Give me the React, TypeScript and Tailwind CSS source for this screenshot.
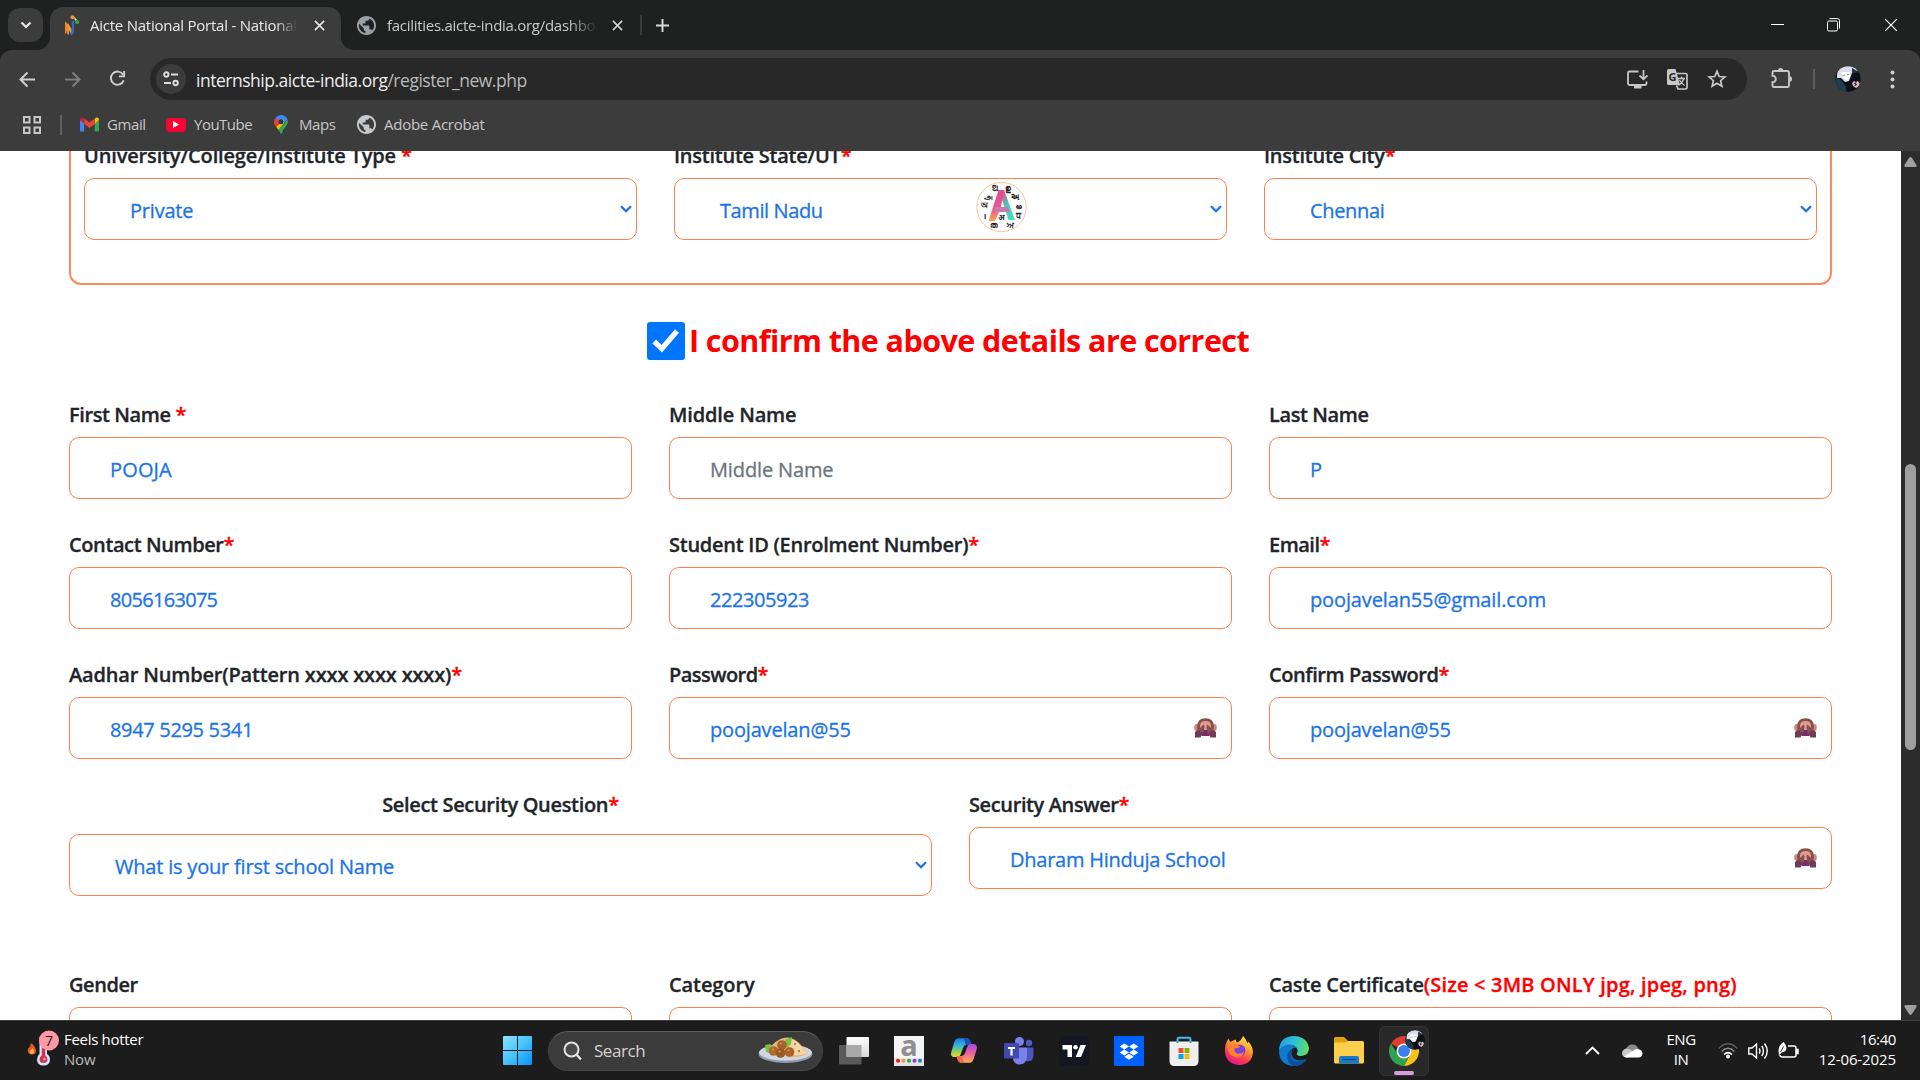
import type { ReactNode } from 'react';
import clsx from 'clsx';

/* ---------- Browser chrome ---------- */

function Globe({ fill }: { fill: string }) {
  return (
    <svg width="19" height="19" viewBox="2 2 20 20" className="shrink-0">
      <path
        d="M12 2C6.480 2 2 6.480 2 12s4.480 10 10 10 10-4.480 10-10S17.520 2 12 2zm-1 17.930c-3.950-.490-7-3.850-7-7.930 0-.620.080-1.210.210-1.790L9 15v1c0 1.100.9 2 2 2v1.930zm6.900-2.540c-.260-.810-1-1.390-1.900-1.390h-1v-3c0-.550-.450-1-1-1H8v-2h2c.550 0 1-.450 1-1V7h2c1.100 0 2-.9 2-2v-.410c2.930 1.190 5 4.060 5 7.410 0 2.080-.8 3.970-2.100 5.390z"
        fill={fill}
      />
    </svg>
  );
}

function CloseX({ size, color, width = 1.8 }: { size: number; color: string; width?: number }) {
  return (
    <svg width={size} height={size} viewBox="0 0 12 12" className="shrink-0" fill="none" stroke={color} strokeWidth={width}>
      <path d="M1 1 11 11M11 1 1 11" />
    </svg>
  );
}

function TabStrip() {
  return (
    <div className="flex h-[50px] items-start bg-[#1f2120]">
      <div className="ml-2 mt-2 flex h-[34px] w-[35px] items-center justify-center rounded-[12px] bg-[#3c3c3c]">
        <svg width="12" height="8" viewBox="0 0 12 8" fill="none" stroke="#e6e6e6" strokeWidth="2.2">
          <path d="M1.500 1.500 6 6 10.500 1.500" />
        </svg>
      </div>
      <div className="relative ml-[7px] mt-[7px] flex h-[43px] w-[291px] items-center rounded-t-[13px] bg-[#3c3c3c] pb-[7px]">
        <svg className="absolute -left-[13px] bottom-0" width="13" height="13" viewBox="0 0 13 13">
          <path d="M13 0V13H0A13 13 0 0 0 13 0z" fill="#3c3c3c" />
        </svg>
        <svg className="absolute -right-[13px] bottom-0" width="13" height="13" viewBox="0 0 13 13">
          <path d="M0 0V13H13A13 13 0 0 1 0 0z" fill="#3c3c3c" />
        </svg>
        <svg className="ml-[14px] shrink-0" width="17" height="21" viewBox="0 0 17 21">
          <path d="M1 6.500 4 9l1 4V20L3 18.500 2.800 15 2 19 1 18z" fill="#f08a24" />
          <path d="M4 8 7.500 14V20L4 13z" fill="#f5a030" />
          <path d="M7.500 7 10 5.500V16Q10 20 6.500 20L8 15z" fill="#2b6be4" />
          <circle cx="8.500" cy="2.300" r="2" fill="#f4943a" />
          <path d="M10 2 13 4.500 11 6z" fill="#d9d9d9" />
          <circle cx="13.200" cy="7" r="2" fill="#2eb82e" />
        </svg>
        <span className="ml-[9px] w-[207px] overflow-hidden whitespace-nowrap text-[15px] leading-[21px] tracking-[-0.24px] text-[#e8e8e8] [mask-image:linear-gradient(to_right,black_90%,transparent)]">
          Aicte National Portal - National
        </span>
        <span className="ml-[17px]">
          <CloseX size={11} color="#e8e8e8" />
        </span>
      </div>
      <div className="flex h-[50px] items-center">
        <span className="ml-[16px]">
          <Globe fill="#9aa0a6" />
        </span>
        <span className="ml-[11px] w-[211px] overflow-hidden whitespace-nowrap text-[15px] leading-[21px] tracking-[-0.28px] text-[#c9c9c9] [mask-image:linear-gradient(to_right,black_86%,transparent)]">
          facilities.aicte-india.org/dashboard
        </span>
        <span className="ml-[14px]">
          <CloseX size={11} color="#cfcfcf" />
        </span>
        <span className="ml-[17px] h-5 w-[2px] bg-[#3a3c3b]" />
        <svg className="ml-[14px]" width="13" height="13" viewBox="0 0 13 13" stroke="#dcdcdc" strokeWidth="1.900">
          <path d="M6.500 0V13M0 6.500H13" />
        </svg>
      </div>
      <div className="ml-auto flex h-[50px] items-center">
        <span className="-mt-[2px] h-px w-[13px] bg-white" />
        <svg className="ml-[43px]" width="13" height="14" viewBox="0 0 13 14" fill="none" stroke="#fff">
          <rect x="0.500" y="3" width="10" height="10" rx="1.500" />
          <path d="M2.500 .6H10.500Q12.500 .6 12.500 2.600V10.500" />
        </svg>
        <span className="ml-[44px] mr-[22px]">
          <CloseX size={14} color="#fff" width={1.1} />
        </span>
      </div>
    </div>
  );
}

function Avatar({ size }: { size: number }) {
  return (
    <svg width={size} height={size} viewBox="0 0 26 26" className="shrink-0">
      <defs>
        <clipPath id={`avatar${size}`}>
          <circle cx="13" cy="13" r="12.700" />
        </clipPath>
      </defs>
      <g clipPath={`url(#avatar${size})`}>
        <rect width="26" height="26" fill="#0c1018" />
        <path d="M0 11 6 14 10 19 12 26H0z" fill="#1b3f50" />
        <path d="M2 9Q3-1 13-1q8 0 10 6l-6 2-3 8-4 1-4-4-4 0z" fill="#dcdcea" />
        <path d="M6 6 15 6 15 11 12 15 8 12z" fill="#fff" />
        <path d="M7.500 9.500 10 9M12 8.500l2 0" stroke="#6d6f8c" strokeWidth=".8" />
        <path d="M17 2 24 6 17 7.500z" fill="#2a3142" />
        <path d="M17 17l2-2 2 1 2-1 2 3-2 3-2 1-3-2z" fill="#d9b8c6" />
        <path d="M19 17l3 2M21 16l-1 4" stroke="#3a2633" />
      </g>
    </svg>
  );
}

function Toolbar() {
  return (
    <div className="flex h-[58px] items-center rounded-t-[12px] bg-[#3c3c3c]">
      <svg className="ml-[19px]" width="17" height="17" viewBox="0 0 17 17" fill="none" stroke="#cfcfcf" strokeWidth="2">
        <path d="M16 8.500H2M8.500 1.500 1.500 8.500 8.500 15.500" />
      </svg>
      <svg className="ml-[28px]" width="17" height="17" viewBox="0 0 17 17" fill="none" stroke="#7d7d7d" strokeWidth="2">
        <path d="M1 8.500H15M8.500 1.500 15.500 8.500 8.500 15.500" />
      </svg>
      <svg className="-mt-px ml-[28px]" width="17" height="17" viewBox="0 0 18 18" fill="none" stroke="#cfcfcf" strokeWidth="2">
        <path d="M15 5A7 7 0 1 0 15.600 11" />
        <path d="M16 1V6.800H10.500" />
      </svg>
      <div className="ml-[24px] flex h-[42px] w-[1597px] items-center rounded-full bg-[#282828]">
        <span className="ml-[6px] flex size-[30px] items-center justify-center rounded-full bg-[#3c3c3c]">
          <svg width="16" height="16" viewBox="0 0 16 16" fill="none" stroke="#dedede" strokeWidth="1.900">
            <circle cx="3.300" cy="3.500" r="2.200" />
            <path d="M8 3.500H15M1 12H8" />
            <circle cx="12.600" cy="12" r="2.200" />
          </svg>
        </span>
        <span className="ml-[10px] mt-px whitespace-nowrap text-[17.5px] leading-6 tracking-[-0.48px] text-[#b9b9b9]">
          <span className="text-[#ececec]">internship.aicte-india.org</span>/register_new.php
        </span>
        <svg className="ml-auto" width="21" height="19" viewBox="0 0 21 19" fill="none" stroke="#c7c7c7" strokeWidth="1.800">
          <path d="M11.500 1.500H2.500Q1 1.500 1 3V13.500Q1 15 2.500 15H18Q19.500 15 19.500 13.500V11.500" />
          <path d="M16.500 0V9M12.500 5.500 16.500 9.300 20.500 5.500" />
          <path d="M7 17H14.500" strokeWidth="3" />
        </svg>
        <svg className="ml-[19px]" width="21" height="21" viewBox="0 0 21 21">
          <path d="M1.500 0H8.500L13 16H1.500Q0 16 0 14.500V1.500Q0 0 1.500 0z" fill="#c7c7c7" />
          <path d="M8 4.500H18.500Q20 4.500 20 6V18.500Q20 20 18.500 20H11L9.500 16.500" fill="none" stroke="#c7c7c7" strokeWidth="1.700" />
          <text x="1.500" y="12" fontSize="11" fontWeight="700" fill="#282828" fontFamily="Open Sans, sans-serif">G</text>
          <path d="M11 9.500H18M14.500 7.500V9.500M17 9.500Q15.500 14 11.500 16.500M12.500 11Q14.500 14.500 17.500 16.500" fill="none" stroke="#c7c7c7" strokeWidth="1.300" />
        </svg>
        <svg className="ml-[19px] mr-[20px]" width="20" height="20" viewBox="0 0 20 20" fill="none" stroke="#c7c7c7" strokeWidth="1.700">
          <path d="M10 2.300 12.200 7.500 17.900 8 13.600 11.700 14.900 17.200 10 14.300 5.100 17.200 6.400 11.700 2.100 8 7.800 7.500z" />
        </svg>
      </div>
      <svg className="-mt-[2px] ml-[24px]" width="22" height="22" viewBox="0 0 22 22">
        <path
          d="M3 4H16.500Q18 4 18 5.500V18.500Q18 20 16.500 20H3Q1.500 20 1.500 18.500V15.300A3.300 3.300 0 0 0 1.500 8.700V5.500Q1.500 4 3 4z"
          fill="none"
          stroke="#c7c7c7"
          strokeWidth="1.900"
        />
        <path d="M7 3.500A2.600 2.600 0 0 1 12.200 3.500zM18.500 9.300A2.600 2.600 0 0 1 18.500 14.500z" fill="#c7c7c7" />
      </svg>
      <span className="ml-[20px] h-5 w-[2px] bg-[#5d5d5d]" />
      <span className="ml-[20px]">
        <Avatar size={26} />
      </span>
      <svg className="ml-[29px]" width="5" height="19" viewBox="0 0 5 19" fill="#cfcfcf">
        <circle cx="2.500" cy="2.500" r="2" />
        <circle cx="2.500" cy="9.500" r="2" />
        <circle cx="2.500" cy="16.500" r="2" />
      </svg>
    </div>
  );
}

function Bookmarks() {
  const label = 'whitespace-nowrap text-[15px] leading-5 -mt-[2px]';
  return (
    <div className="flex h-[43px] items-start bg-[#3c3c3c] text-[#c7c7c7]">
      <div className="flex h-[34px] items-center">
        <svg className="ml-[23px]" width="18" height="18" viewBox="0 0 18 18" fill="none" stroke="#c7c7c7" strokeWidth="2">
          <path d="M1 1H6.500V6.500H1zM11.500 1H17V6.500H11.500zM1 11.500H6.500V17H1zM11.500 11.500H17V17H11.500z" />
        </svg>
        <span className="ml-[19px] h-5 w-[2px] bg-[#5f5f5f]" />
        <svg className="-mt-px ml-[18px]" width="19" height="15" viewBox="0 0 19 15">
          <path d="M0 3V13.500Q0 14.500 1 14.500H4.200V6z" fill="#4285f4" />
          <path d="M19 3V13.500Q19 14.500 18 14.500H14.800V6z" fill="#34a853" />
          <path d="M14.800 6V1.500Q16.500 0 18 .8 19 1.400 19 3L14.800 6.500z" fill="#fbbc04" />
          <path d="M4.200 7V1.600L9.500 5.600 14.800 1.600V7L9.500 11z" fill="#ea4335" />
          <path d="M0 3Q0 1.400 1 .8 2.500 0 4.200 1.500V6.500z" fill="#c5221f" />
        </svg>
        <span className={clsx(label, 'ml-2 w-[38px] tracking-[-0.4px]')}>Gmail</span>
        <span className="-mt-px ml-[21px] flex h-[14px] w-5 items-center justify-center rounded-[4px] bg-[#ff0033]">
          <svg width="6" height="7" viewBox="0 0 6 7" fill="#fff">
            <path d="M0 0 6 3.500 0 7z" />
          </svg>
        </span>
        <span className={clsx(label, 'ml-2 w-[58px] tracking-[-0.5px]')}>YouTube</span>
        <svg className="-mt-px ml-[22px]" width="14" height="19" viewBox="0 0 14 19">
          <path d="M7 0A7 7 0 0 1 13.500 4.500L7 11 1.500 2.800A7 7 0 0 1 7 0z" fill="#4285f4" />
          <path d="M1.500 2.800 6 7 2.300 12Q0 9.500 0 7 0 4.500 1.500 2.800z" fill="#ea4335" />
          <path d="M2.300 12 9.500 4.500 10 8 4.600 15z" fill="#fbbc04" />
          <path d="M13.500 4.500Q15 8.500 11.500 12 8.500 15 7.800 18.200 7 19.500 6.200 18.200 5.800 16.500 4.600 15z" fill="#34a853" />
          <circle cx="7" cy="6.800" r="2.500" fill="#2f3a45" />
        </svg>
        <span className={clsx(label, 'ml-[11px] w-[38px] tracking-[-0.4px]')}>Maps</span>
        <span className="-mt-px ml-[20px]">
          <Globe fill="#c5c9cd" />
        </span>
        <span className={clsx(label, 'ml-2 tracking-[-0.25px]')}>Adobe Acrobat</span>
      </div>
    </div>
  );
}

/* ---------- Registration form ---------- */

const box =
  'flex items-center h-[62px] rounded-[10px] border border-[#ff7f50] bg-white text-[20px] leading-7 whitespace-nowrap [-webkit-text-stroke:0.3px]';

function Monkey() {
  return (
    <svg width="23" height="20" viewBox="0 0 23 20" className="shrink-0">
      <ellipse cx="2.500" cy="9.500" rx="2.300" ry="3.500" fill="#c98980" />
      <ellipse cx="20.500" cy="9.500" rx="2.300" ry="3.500" fill="#c98980" />
      <path d="M3 9Q3 .3 11.500 .3T20 9Q20 16 11.500 16T3 9z" fill="#865346" />
      <path d="M6 8Q6 3 11.500 3T17 8Q17 14 11.500 14.500T6 8z" fill="#e39a94" />
      <path d="M7 12H16L15.500 18H7.500z" fill="#7a2b6a" />
      <path d="M2 17 1 14 6 10 9.500 6.500 10.500 8 10 13 8 17z" fill="#855052" />
      <path d="M21 17 22 14 17 10 13.500 6.500 12.500 8 13 13 15 17z" fill="#855052" />
      <path d="M1 14.500 4 12 8.500 15 6.500 19.500H1zM22 14.500 19 12 14.500 15 16.500 19.500H22z" fill="#703a5a" />
    </svg>
  );
}

function Label({ text, star, center, tracking }: { text: ReactNode; star?: boolean; center?: boolean; tracking: string }) {
  return (
    <div
      className={clsx(
        'h-7 whitespace-nowrap text-[20px] font-semibold leading-7 text-[#212529] [-webkit-text-stroke:0.3px]',
        tracking,
        center && 'text-center',
      )}
    >
      {text}
      {star && <span className="text-[#ff0000]">*</span>}
    </div>
  );
}

function Input({ value, tracking, placeholder, secret }: { value: string; tracking: string; placeholder?: boolean; secret?: boolean }) {
  return (
    <div className={clsx(box, 'justify-between pl-[40px] pr-[14px] pt-[3px]', placeholder ? 'text-[#6c757d]' : 'text-[#1a73e8]', tracking)}>
      <span>{value}</span>
      {secret && (
        <span className="-mt-[3px]">
          <Monkey />
        </span>
      )}
    </div>
  );
}

function Select({ value, tracking }: { value: string; tracking: string }) {
  return (
    <div className={clsx(box, 'justify-between pl-[45px] pr-[4px] pt-[3px] text-[#1a73e8]', tracking)}>
      <span>{value}</span>
      <svg className="-mt-[3px]" width="12" height="8" viewBox="0 0 12 8" fill="none" stroke="#1a73e8" strokeWidth="2.300">
        <path d="M1 1.200 6 6.200 11 1.200" />
      </svg>
    </div>
  );
}

function LanguageBadge() {
  const marks: [string, number, number][] = [
    ['ଅ', 19, 10],
    ['ഉ', 32, 10],
    ['அ', 12, 18],
    ['અ', 39, 19],
    ['অ', 8, 27],
    ['అ', 43, 28],
    ['i', 9, 38],
    ['ਧ', 42, 37],
    ['अ', 25.5, 39],
    ['ത', 18, 47],
    ['ਅ', 34, 47],
  ];
  return (
    <svg className="absolute left-[976px] top-[30px]" width="51" height="52" viewBox="0 0 51 52">
      <defs>
        <linearGradient id="letterLeft" x1="0" y1="0" x2="0" y2="1">
          <stop offset="0" stopColor="#e8468f" />
          <stop offset=".6" stopColor="#e75a92" />
          <stop offset="1" stopColor="#f9a156" />
        </linearGradient>
        <linearGradient id="letterRight" x1="0" y1="0" x2="0" y2="1">
          <stop offset="0" stopColor="#e8468f" />
          <stop offset=".5" stopColor="#47c9c0" />
          <stop offset="1" stopColor="#4cdcb8" />
        </linearGradient>
      </defs>
      <circle cx="25.500" cy="26" r="24.700" fill="#fff" stroke="#f9c6a0" />
      <path d="M23 9H28L39 39H32.500L25.500 17z" fill="url(#letterRight)" />
      <path d="M22.500 9H27.500L27 17 24 29 19 40H12.500z" fill="url(#letterLeft)" />
      <path d="M19 26H32L33.500 31H18z" fill="#c879ac" />
      <g fontSize="7.500" fontWeight="700" fill="#222" textAnchor="middle" fontFamily="Noto Sans, sans-serif">
        {marks.map(([t, x, y]) => (
          <text key={t} x={x} y={y}>
            {t}
          </text>
        ))}
      </g>
    </svg>
  );
}

function Form() {
  return (
    <div className="relative h-full flex-1 overflow-hidden bg-white">
      <div className="flex flex-col pl-[69px] pr-[69px]">
        <div className="h-[134px] rounded-b-[12px] border-2 border-t-0 border-[#ff875c] px-[13px]">
          <div className="-mt-[9px] grid grid-cols-3 gap-x-[37px]">
            <div>
              <Label text="University/College/Institute Type " star tracking="tracking-[-0.15px]" />
              <div className="mt-2">
                <Select value="Private" tracking="tracking-[-0.2px]" />
              </div>
            </div>
            <div>
              <Label text="Institute State/UT" star tracking="tracking-[-0.25px]" />
              <div className="mt-2">
                <Select value="Tamil Nadu" tracking="tracking-[-0.4px]" />
              </div>
            </div>
            <div>
              <Label text="Institute City" star tracking="tracking-[-0.25px]" />
              <div className="mt-2">
                <Select value="Chennai" tracking="tracking-[-0.35px]" />
              </div>
            </div>
          </div>
        </div>

        <div className="mt-[37px] flex h-[38px] items-center pl-[578px]">
          <span className="flex size-[38px] shrink-0 items-center justify-center rounded-[3px] bg-[#0075ff]">
            <svg width="28" height="26" viewBox="0 0 28 26" fill="none" stroke="#fff" strokeWidth="5.200">
              <path d="M2.200 13.500 9.800 20.800 25 3" />
            </svg>
          </span>
          <span className="-mt-[2px] ml-[4px] whitespace-nowrap text-[30.5px] font-bold leading-[38px] tracking-[-0.58px] text-[#ff0000]">
            I confirm the above details are correct
          </span>
        </div>

        <div className="mt-[41px] grid grid-cols-3 gap-x-[37px] gap-y-[32px]">
          <div>
            <Label text="First Name " star tracking="tracking-[-0.4px]" />
            <div className="mt-2"><Input value="POOJA" tracking="tracking-[0.15px]" /></div>
          </div>
          <div>
            <Label text="Middle Name" tracking="tracking-[-0.15px]" />
            <div className="mt-2"><Input value="Middle Name" placeholder tracking="tracking-[-0.13px]" /></div>
          </div>
          <div>
            <Label text="Last Name" tracking="tracking-[-0.4px]" />
            <div className="mt-2"><Input value="P" tracking="tracking-normal" /></div>
          </div>
          <div>
            <Label text="Contact Number" star tracking="tracking-[-0.4px]" />
            <div className="mt-2"><Input value="8056163075" tracking="tracking-[-0.7px]" /></div>
          </div>
          <div>
            <Label text="Student ID (Enrolment Number)" star tracking="tracking-[-0.26px]" />
            <div className="mt-2"><Input value="222305923" tracking="tracking-[-0.45px]" /></div>
          </div>
          <div>
            <Label text="Email" star tracking="tracking-[-0.5px]" />
            <div className="mt-2"><Input value="poojavelan55@gmail.com" tracking="tracking-[-0.13px]" /></div>
          </div>
          <div>
            <Label text="Aadhar Number(Pattern xxxx xxxx xxxx)" star tracking="tracking-[-0.17px]" />
            <div className="mt-2"><Input value="8947 5295 5341" tracking="tracking-[-0.33px]" /></div>
          </div>
          <div>
            <Label text="Password" star tracking="tracking-[-0.55px]" />
            <div className="mt-2"><Input value="poojavelan@55" secret tracking="tracking-[-0.17px]" /></div>
          </div>
          <div>
            <Label text="Confirm Password" star tracking="tracking-[-0.42px]" />
            <div className="mt-2"><Input value="poojavelan@55" secret tracking="tracking-[-0.17px]" /></div>
          </div>
        </div>

        <div className="mt-[32px] grid grid-cols-2 gap-x-[37px]">
          <div>
            <Label text="Select Security Question" star center tracking="tracking-[-0.33px]" />
            <div className="mt-[15px]"><Select value="What is your first school Name" tracking="tracking-[-0.2px]" /></div>
          </div>
          <div>
            <Label text="Security Answer" star tracking="tracking-[-0.38px]" />
            <div className="mt-2"><Input value="Dharam Hinduja School" secret tracking="tracking-[-0.25px]" /></div>
          </div>
        </div>

        <div className="mt-[75px] grid grid-cols-3 gap-x-[37px]">
          <div>
            <Label text="Gender" tracking="tracking-[-0.45px]" />
            <div className="mt-2"><div className={box} /></div>
          </div>
          <div>
            <Label text="Category" tracking="tracking-[-0.1px]" />
            <div className="mt-2"><div className={box} /></div>
          </div>
          <div>
            <Label
              text={
                <>
                  Caste Certificate<span className="tracking-[0.19px] text-[#ff0000]">(Size &lt; 3MB ONLY jpg, jpeg, png)</span>
                </>
              }
              tracking="tracking-[-0.24px]"
            />
            <div className="mt-2"><div className={box} /></div>
          </div>
        </div>
      </div>
      <LanguageBadge />
    </div>
  );
}

function Scrollbar() {
  return (
    <div className="flex h-full w-[19px] flex-col items-center bg-[#2c2c2c] pb-[5px] pt-[6px]">
      <svg width="13" height="10" viewBox="0 0 13 10" fill="#9f9f9f">
        <path d="M6.500 0Q7.200 0 8 1L12.500 8Q13 10 11.500 10H1.500Q0 10 .5 8L5 1Q5.800 0 6.500 0z" />
      </svg>
      <div className="mt-[297px] h-[286px] w-[11px] rounded-full bg-[#9f9f9f]" />
      <svg className="mt-auto" width="13" height="10" viewBox="0 0 13 10" fill="#9f9f9f">
        <path d="M6.500 10Q7.200 10 8 9L12.500 2Q13 0 11.500 0H1.500Q0 0 .5 2L5 9Q5.800 10 6.500 10z" />
      </svg>
    </div>
  );
}

/* ---------- Taskbar ---------- */

function WeatherIcon() {
  return (
    <svg width="33" height="38" viewBox="0 0 33 38">
      <path d="M5 13Q9 17 9 20.500 9 24 5 24T.7 20Q.7 17.500 2.500 16.500 3.800 15.500 3.500 13z" transform="translate(0 .5)" fill="#e8562a" />
      <path d="M5.500 18Q7.500 20 7 22 6.500 24 4.500 24 2.700 23.500 2.700 21.500z" fill="#fdb63c" />
      <path d="M12.500 8Q12.500 5 16.300 5T20 8V24Q23 26 23 29.500 23 35.500 16.500 35.500T10 29.500Q10 26 12.500 24z" fill="#cfe6f8" />
      <path d="M14.800 14H18.200V25.300Q20.500 27 20.500 29.500 20.500 33 16.500 33T12.500 29.500Q12.500 27 14.800 25.300z" fill="#d9304f" />
      <circle cx="17.500" cy="29" r="1.200" fill="#ffb3bd" />
      <circle cx="22" cy="10.500" r="10" fill="#ff99a4" />
      <text x="22" y="15.500" fontSize="14" textAnchor="middle" fill="#1c1c1c" fontFamily="Open Sans, sans-serif">7</text>
    </svg>
  );
}

function WindowsIcon() {
  return (
    <svg width="29" height="29" viewBox="0 0 29 29">
      <defs>
        <linearGradient id="win" gradientUnits="userSpaceOnUse" x1="0" y1="0" x2="29" y2="29">
          <stop offset="0" stopColor="#8be3fd" />
          <stop offset=".5" stopColor="#46c4fb" />
          <stop offset="1" stopColor="#0a8dfa" />
        </linearGradient>
      </defs>
      <path d="M0 1Q0 0 1 0H14V14H0zM15 0H28Q29 0 29 1V14H15zM0 15H14V29H1Q0 29 0 28zM15 15H29V28Q29 29 28 29H15z" fill="url(#win)" />
    </svg>
  );
}

function FalafelIcon() {
  return (
    <svg width="56" height="28" viewBox="0 0 56 28">
      <ellipse cx="27.500" cy="18" rx="27" ry="9" fill="#8e99ad" />
      <ellipse cx="27.500" cy="16.500" rx="26.500" ry="8" fill="#d0d7e2" />
      <path d="M9 16Q17 2 30 1.500 36 1.500 43 9L50 17.500Q42 22 31 21z" fill="#e3b877" />
      <path d="M29 4Q36 2 41 8L49.500 17Q42 20 36 19z" fill="#f3d6a6" />
      <path d="M7 9 13 8 12 17 8 16zM27 4 34 1 33 8 28 12z" fill="#79c33c" />
      <circle cx="24" cy="9" r="4.800" fill="#a5622a" />
      <circle cx="15.500" cy="15" r="4.800" fill="#ab692e" />
      <circle cx="22.500" cy="17" r="4.800" fill="#9c5824" />
      <circle cx="31.500" cy="16" r="4.800" fill="#a8622a" />
      <path d="M22 7.500h2M14 13.500h2M20.500 15.500h2M29.500 14.500h2" stroke="#d79b5b" strokeWidth="1.500" />
      <circle cx="41" cy="15" r="1" fill="#9c5f2c" />
      <circle cx="37" cy="8" r=".9" fill="#9c5f2c" />
    </svg>
  );
}

function TaskViewIcon() {
  return (
    <svg width="30" height="28" viewBox="0 0 30 28">
      <defs>
        <linearGradient id="front" x1="0" y1="0" x2="0" y2="1">
          <stop offset="0" stopColor="#fff" />
          <stop offset="1" stopColor="#d8d8d8" />
        </linearGradient>
      </defs>
      <rect x="0" y="8" width="22.500" height="19.500" rx="1" fill="#5a5a5a" />
      <rect x="7.500" y="0" width="22.500" height="20" rx="1" fill="url(#front)" />
      <rect x="7.500" y="8" width="15" height="12" fill="#a9a9a9" />
    </svg>
  );
}

function AmazonIcon() {
  return (
    <svg width="30" height="30" viewBox="0 0 30 30">
      <rect width="30" height="30" fill="#f4f4f4" />
      <path d="M0 22H30V30H0z" fill="#e3e3e3" />
      <text x="15" y="19.500" fontSize="29" fontWeight="700" textAnchor="middle" fill="#8f8f8f" fontFamily="Open Sans, sans-serif">a</text>
      <circle cx="4" cy="24.700" r="2" fill="#f01414" />
      <circle cx="9.500" cy="24.700" r="2" fill="#f79433" />
      <circle cx="15" cy="24.700" r="2" fill="#27a35a" />
      <circle cx="20.500" cy="24.700" r="2" fill="#8d3bd1" />
      <circle cx="26" cy="24.700" r="2" fill="#1a7ad9" />
    </svg>
  );
}

function CopilotIcon() {
  return (
    <svg width="28" height="27" viewBox="0 0 30 28">
      <defs>
        <linearGradient id="copA" x1="0" y1="0" x2="0" y2="1">
          <stop offset="0" stopColor="#1b7fe0" />
          <stop offset=".4" stopColor="#35b8d6" />
          <stop offset=".75" stopColor="#9fd04a" />
          <stop offset="1" stopColor="#f6d531" />
        </linearGradient>
        <linearGradient id="copB" x1="0" y1="0" x2="0" y2="1">
          <stop offset="0" stopColor="#a14bea" />
          <stop offset=".5" stopColor="#ee5f9b" />
          <stop offset="1" stopColor="#ffb14e" />
        </linearGradient>
      </defs>
      <path d="M9 1H18Q21 1 22 5L23 8H17Q15 8 14 11L11.500 18Q10.500 21 8 21H4Q0 20.500 1.500 15L4.500 5.500Q6 1 9 1z" fill="url(#copA)" />
      <path d="M9 1H18Q21 1 22 5L23 8H17L15.500 3Q15 1 13 1z" fill="#1c4fb4" />
      <path d="M21 27H12Q9 27 8 23L7 20H12.500Q15 20 16 17L18.500 10Q19.500 7 22 7H25.500Q30 7.500 28.500 13L25.500 22.500Q24 27 21 27z" fill="url(#copB)" />
      <path d="M21 27H12Q9 27 8 23L7 20H12.500L14.500 25Q15.500 27 17 27z" fill="#f4694a" />
    </svg>
  );
}

function TeamsIcon() {
  return (
    <svg width="30" height="28" viewBox="0 0 30 28">
      <circle cx="25" cy="6" r="3.200" fill="#5059c9" />
      <path d="M21 10.500H28.500Q29.500 10.500 29.500 12V19Q29 24 24 24.500L21 24z" fill="#4c55bd" />
      <circle cx="15.500" cy="4.500" r="4.500" fill="#7b83eb" />
      <path d="M9 10.500H21.500Q23 10.500 23 12V20Q22 27.500 15.500 27.500T9 20z" fill="#7b83eb" />
      <rect x="0" y="6" width="15" height="15.500" rx="1.300" fill="#4049ad" />
      <path d="M4 10H11V12H8.600V18.500H6.400V12H4z" fill="#fff" />
    </svg>
  );
}

function TradingViewIcon() {
  return (
    <svg width="30" height="30" viewBox="0 0 30 30">
      <rect width="30" height="30" rx="5" fill="#131722" />
      <path d="M3.500 9H13V21H8.500V13.500H3.500z" fill="#fff" />
      <circle cx="16.500" cy="11.300" r="2.300" fill="#fff" />
      <path d="M21.500 9H27L22 21H16.700z" fill="#fff" />
    </svg>
  );
}

function DropboxIcon() {
  return (
    <svg width="30" height="30" viewBox="0 0 30 30">
      <rect width="30" height="30" fill="#0061fe" />
      <path d="M10.300 7.500 15 10.500 10.300 13.500 5.600 10.500zM19.700 7.500 24.400 10.500 19.700 13.500 15 10.500zM10.300 13.500 15 16.500 10.300 19.500 5.600 16.500zM19.700 13.500 24.400 16.500 19.700 19.500 15 16.500zM15 17.700 19.700 20.700 15 23.700 10.300 20.700z" fill="#fff" />
    </svg>
  );
}

function StoreIcon() {
  return (
    <svg width="30" height="30" viewBox="0 0 30 30">
      <path d="M8.500 7V3.500Q8.500 1.800 10.200 1.800H19.800Q21.500 1.800 21.500 3.500V7" fill="none" stroke="#3cc3f3" strokeWidth="1.900" />
      <path d="M.5 5.500H29.500V25Q29.500 30 24.500 30H5.500Q.5 30 .5 25z" fill="#efefef" />
      <path d="M8.500 5.500V7M21.500 5.500V7" stroke="#1b86c9" strokeWidth="1.900" />
      <path d="M9.500 12H14.500V17H9.500z" fill="#f25022" />
      <path d="M15.500 12H20.500V17H15.500z" fill="#7fba00" />
      <path d="M9.500 18H14.500V23H9.500z" fill="#00a4ef" />
      <path d="M15.500 18H20.500V23H15.500z" fill="#ffb900" />
    </svg>
  );
}

function FirefoxIcon() {
  return (
    <svg width="30" height="30" viewBox="0 0 30 30">
      <defs>
        <linearGradient id="fox" x1=".8" y1="0" x2=".3" y2="1">
          <stop offset="0" stopColor="#fff04a" />
          <stop offset=".4" stopColor="#ff9a2e" />
          <stop offset=".7" stopColor="#ff3d55" />
          <stop offset="1" stopColor="#e0128c" />
        </linearGradient>
      </defs>
      <path d="M19 0Q22 3 23.500 7 24.500 6.500 24.500 5.500 29 11 29 16 28 28.500 15 29 2 28 1 16 .5 8 4.500 2.500 5 4.500 6.500 6 9 4 12 3.500 11.500 5 13 6.500 17 5 19 0z" fill="url(#fox)" />
      <circle cx="15.500" cy="14.500" r="6" fill="#7a42e0" />
      <path d="M3 10Q8 5 12.500 8.500L16.500 10.500Q14 12.500 10.500 12.500 10 16 13 17.500 17 18.500 20 16 18 22 12 21.500 4 20 3 10z" fill="#ff8230" />
    </svg>
  );
}

function EdgeIcon() {
  return (
    <svg width="30" height="30" viewBox="0 0 30 30">
      <defs>
        <linearGradient id="edgeTop" x1="0" y1=".4" x2="1" y2=".6">
          <stop offset="0" stopColor="#259fe0" />
          <stop offset=".5" stopColor="#2fc0d6" />
          <stop offset="1" stopColor="#5fe05a" />
        </linearGradient>
      </defs>
      <path d="M0 15Q2 5 10 6L20 14 17 21 27 23Q22 30 15 30 0 29 0 15z" fill="#0f79d0" />
      <path d="M0 14Q1 0 15 0 28 .5 30 12 30 19 22.500 20 17.500 20 17.500 18 19 16.500 18.500 14 17 9 11 8.500 4 8.500 0 14z" fill="url(#edgeTop)" />
      <path d="M13 13Q10 19 14 23.500 19 28 27 22.500L28 23Q22.500 31 14 30 7 26 8.500 18.500 10 14 13 13z" fill="#0b4f9e" />
      <path d="M13 13Q14.500 11 17.500 12 19.500 15 17.500 18 18 20 21 20.500 24 20.500 27.500 18.500 28.500 21 27 23 19 26 14.500 22.500 11 18 13 13z" fill="#1c1c1c" />
    </svg>
  );
}

function ExplorerIcon() {
  return (
    <svg width="30" height="27" viewBox="0 0 30 27">
      <path d="M0 1.500Q0 0 1.500 0H10L14 4H28.500V10H0z" fill="#dfa112" />
      <path d="M0 5.500H11L14 4H28.500Q30 4 30 5.500V25Q30 26.500 28.500 26.500H1.500Q0 26.500 0 25z" fill="#fdcf4d" />
      <path d="M5 26.500V21Q5 19 7 19H23Q25 19 25 21V26.500z" fill="#1a7bcb" />
      <path d="M8.500 22.500H21.500" stroke="#0c4f8f" strokeWidth="1.300" />
    </svg>
  );
}

function ChromeIcon() {
  return (
    <svg width="30" height="30" viewBox="0 0 30 30">
      <path d="M15 15 2.010 7.500A15 15 0 0 1 27.990 7.500z" fill="#e33b2e" />
      <path d="M15 8H28.300A15 15 0 0 1 15 30L21.100 18.500z" fill="#fbc116" />
      <path d="M2.010 7.500 8.900 18.500 15 22 20.500 19.500 15 30A15 15 0 0 1 2.010 7.500z" fill="#31a350" />
      <circle cx="15" cy="15" r="7.500" fill="#fff" />
      <circle cx="15" cy="15" r="6" fill="#3b80ec" />
    </svg>
  );
}

function Cell({ children }: { children: ReactNode }) {
  return <div className="flex h-[50px] w-[55px] items-center justify-center">{children}</div>;
}

function Taskbar() {
  return (
    <div className="flex h-[60px] items-center border-t border-[#3a3c3b] bg-[#1c1c1c] text-[15px] text-white">
      <div className="flex w-[490px] items-center pl-[27px]">
        <span className="-mt-[3px]">
          <WeatherIcon />
        </span>
        <div className="-mt-[4px] ml-[4px] leading-5">
          <div className="tracking-[-0.3px]">Feels hotter</div>
          <div className="tracking-[-0.2px] text-[#bdbdbd]">Now</div>
        </div>
      </div>
      <Cell>
        <WindowsIcon />
      </Cell>
      <div className="ml-[3px] flex h-10 w-[275px] items-center rounded-full border border-[#454545] border-t-[#5c5c5c] bg-[#3b3b3b]">
        <svg className="ml-[14px]" width="19" height="20" viewBox="0 0 19 20" fill="none" stroke="#e3e3e3" strokeWidth="2">
          <circle cx="8.500" cy="8.500" r="7" fill="#4a4a4a" />
          <path d="M13.500 13.500 18 18.500" strokeWidth="2.400" />
        </svg>
        <span className="ml-[12px] mt-px text-[17px] leading-6 tracking-[-0.45px] text-[#d3d3d3]">Search</span>
        <span className="-mt-px ml-auto mr-[8px]">
          <FalafelIcon />
        </span>
      </div>
      <div className="ml-[3.5px] flex">
        <Cell><TaskViewIcon /></Cell>
        <Cell><AmazonIcon /></Cell>
        <Cell><CopilotIcon /></Cell>
        <Cell><TeamsIcon /></Cell>
        <Cell><TradingViewIcon /></Cell>
        <Cell><DropboxIcon /></Cell>
        <Cell><StoreIcon /></Cell>
        <Cell><FirefoxIcon /></Cell>
        <Cell><EdgeIcon /></Cell>
        <Cell><ExplorerIcon /></Cell>
        <Cell>
          <div className="relative flex h-[50px] w-[50px] items-center justify-center rounded-[6px] border border-[#333] bg-[#292929]">
            <ChromeIcon />
            <span className="absolute right-[3px] top-[3px]">
              <Avatar size={20} />
            </span>
            <span className="absolute bottom-0 left-[14px] h-1 w-5 rounded-full bg-[#d79be0]" />
          </div>
        </Cell>
      </div>
      <div className="ml-auto flex items-center pr-6">
        <svg width="15" height="9" viewBox="0 0 15 9" fill="none" stroke="#fff" strokeWidth="1.900">
          <path d="M1 8 7.500 1.500 14 8" />
        </svg>
        <svg className="ml-[22px]" width="21" height="14" viewBox="0 0 21 14">
          <path d="M4 6Q5 .5 10.500 .5 15 .5 16.500 5L12 8z" fill="#8b8b8b" />
          <path d="M0 9Q.5 5 4.500 4.500 7 4.300 9 6L12 8 7 13.500H4.500Q0 13 0 9z" fill="#c9c9c9" />
          <path d="M2 12.500 14 5Q20 4.500 20.500 9.500 20 13.500 16.500 13.500H5Q3 13.500 2 12.500z" fill="#fff" />
        </svg>
        <div className="-mt-[3px] ml-[22px] w-[32px] text-center leading-5 tracking-[-0.45px]">
          <div>ENG</div>
          <div>IN</div>
        </div>
        <svg className="ml-[21px]" width="20" height="16" viewBox="0 0 20 16" fill="none" strokeWidth="1.500">
          <path d="M.7 5.500Q10-4 19.300 5.500" stroke="#5a5a5a" />
          <path d="M3.500 8.500Q10 2 16.500 8.500" stroke="#8a8a8a" />
          <path d="M6 11.500Q10 7.500 14 11.500" stroke="#fff" strokeWidth="1.700" />
          <circle cx="10" cy="13.500" r="2" fill="#fff" />
        </svg>
        <svg className="ml-[10px]" width="21" height="18" viewBox="0 0 21 18" fill="none" stroke="#fff" strokeWidth="1.400">
          <path d="M.8 6H4L8.500 2V16L4 12H.8z" />
          <path d="M11.200 6.500Q12.800 9 11.200 11.500M13.800 4Q17 9 13.800 14M16.500 1.500Q22 9 16.500 16.500" />
        </svg>
        <svg className="-mt-[2px] ml-[9px]" width="21" height="18" viewBox="0 0 21 18" fill="none" stroke="#fff" strokeWidth="1.500">
          <path d="M10 5H16Q18 5 18 7V14Q18 16 16 16H4.500Q2 16 2 14" />
          <path d="M18.500 8.500H20V12.500H18.500z" fill="#fff" />
          <path d="M.8 12Q-.5 5 5.500 1 8 3 8.500 6.500 8.500 11 3.500 11.500L.8 14.500z" fill="#fff" stroke="none" />
          <path d="M2.500 11 5.500 5.500" stroke="#1c1c1c" strokeWidth=".9" />
        </svg>
        <div className="-mt-[4px] ml-[19px] w-[78px] text-right leading-5">
          <div className="tracking-[-0.4px]">16:40</div>
          <div className="tracking-[-0.1px]">12-06-2025</div>
        </div>
      </div>
    </div>
  );
}

export default function App() {
  return (
    <div className="flex h-[1080px] w-[1920px] flex-col overflow-hidden font-['Open_Sans','Noto_Sans',sans-serif]">
      <TabStrip />
      <div className="bg-[#1f2120]">
        <Toolbar />
      </div>
      <Bookmarks />
      <div className="flex min-h-0 flex-1">
        <Form />
        <Scrollbar />
      </div>
      <Taskbar />
    </div>
  );
}
